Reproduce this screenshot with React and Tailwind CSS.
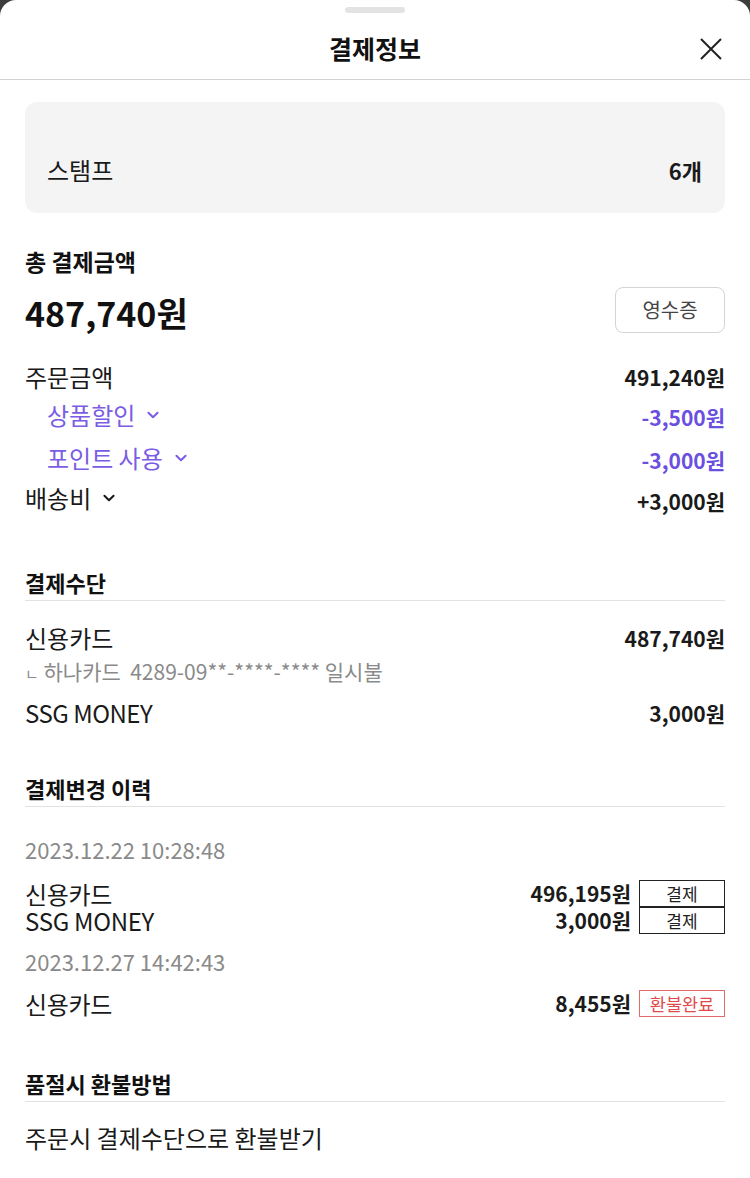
const FONT = { fontFamily: '"Noto Sans CJK KR", "Noto Sans", sans-serif' };

function Chevron({ className = "" }) {
  return (
    <svg viewBox="0 0 24 24" width="22" height="22" fill="none" stroke="currentColor" strokeWidth="2.2" strokeLinecap="round" strokeLinejoin="round" className={className}>
      <path d="m7 9.5 5 5 5-5" />
    </svg>
  );
}

function Row({ label, amount, className = "", amountClass = "", labelClass = "" }) {
  return (
    <div className={`flex h-[30px] items-center justify-between ${className}`}>
      <div className={`flex items-center text-[24px] leading-[30px] ${labelClass}`}>{label}</div>
      <div className={`text-[21px] leading-[30px] font-bold ${amountClass}`}>{amount}</div>
    </div>
  );
}

function SectionTitle({ children, className = "" }) {
  return (
    <div className={`border-b border-[#e2e2e2] pb-[4px] text-[22px] leading-[28px] font-bold text-[#111] ${className}`}>
      {children}
    </div>
  );
}

function HistoryRow({ label, amount, tag, refund, className = "" }) {
  return (
    <div className={`flex h-[27px] items-center justify-between ${className}`}>
      <span className="text-[24px] leading-[27px] tracking-[-0.3px]">{label}</span>
      <div className="flex items-center">
        <span className="mr-[8px] text-[21px] leading-[27px] font-bold">{amount}</span>
        <span
          className={`flex h-[27px] w-[86px] items-center justify-center leading-none ${
            refund
              ? "h-[26px] border border-[#e36a6a] text-[17.5px] text-[#e04a4a]"
              : "border-[1.5px] border-[#222] text-[17px] text-[#222]"
          }`}
        >
          {tag}
        </span>
      </div>
    </div>
  );
}

export default function App() {
  return (
    <div className="min-h-[1178px] bg-[#3d3d3d]" style={FONT}>
      <div className="min-h-[1178px] rounded-t-[16px] bg-white text-[#1a1a1a]">
        {/* header */}
        <div className="relative border-b border-[#d2d2d2] pt-[7px]">
          <div className="mx-auto h-[6px] w-[60px] rounded-full bg-[#e3e3e3]" />
          <div className="mt-[6px] flex h-[60px] items-center justify-center text-[25px] font-bold text-[#111]">
            결제정보
          </div>
          <button className="absolute right-[27px] top-[37px] text-[#222]">
            <svg viewBox="0 0 24 24" width="24" height="24" fill="none" stroke="currentColor" strokeWidth="2">
              <path d="M2 2 22 22M22 2 2 22" />
            </svg>
          </button>
        </div>

        <div className="px-[25px]">
          {/* stamp */}
          <div className="mt-[22px] flex h-[111px] items-center justify-between rounded-[12px] bg-[#f4f4f4] pl-[22px] pr-[23px] pt-[25px]">
            <span className="text-[24px]">스탬프</span>
            <span className="text-[22px] font-bold">6개</span>
          </div>

          {/* total */}
          <div className="mt-[34px] text-[23px] leading-[28px] font-bold text-[#111]">총 결제금액</div>
          <div className="mt-[12px] flex h-[46px] items-center justify-between">
            <span className="translate-y-[3px] text-[34px] leading-[40px] font-bold text-[#111]">487,740원</span>
            <button className="h-[46px] w-[110px] rounded-[8px] border-[1.5px] border-[#d4d4d4] text-[20px] text-[#444]">
              영수증
            </button>
          </div>

          <Row className="mt-[29px]" label="주문금액" amount="491,240원" />
          <Row
            className="mt-[8px]"
            labelClass="pl-[22px] text-[#7a5de3]"
            amountClass="translate-y-[2px] text-[#6a4fe0]"
            label={
              <>
                상품할인
                <Chevron className="ml-[7px]" />
              </>
            }
            amount="-3,500원"
          />
          <Row
            className="mt-[13px]"
            labelClass="pl-[22px] text-[#7a5de3]"
            amountClass="translate-y-[2px] text-[#6a4fe0]"
            label={
              <>
                포인트 사용
                <Chevron className="ml-[7px]" />
              </>
            }
            amount="-3,000원"
          />
          <Row
            className="mt-[10px]"
            amountClass="translate-y-[3px]"
            label={
              <>
                배송비
                <Chevron className="ml-[7px]" />
              </>
            }
            amount="+3,000원"
          />

          {/* payment method */}
          <SectionTitle className="mt-[55px]">결제수단</SectionTitle>
          <Row className="mt-[22px]" label="신용카드" amount="487,740원" />
          <div className="mt-[5px] text-[21px] leading-[26px] text-[#8a8a8a]">
            <span className="text-[15px]">ㄴ</span> 하나카드&nbsp;&nbsp;4289-09**-****-**** 일시불
          </div>
          <Row className="mt-[11px]" label="SSG MONEY" amount="3,000원" labelClass="tracking-[-0.5px]" />

          {/* history */}
          <SectionTitle className="mt-[46px]">결제변경 이력</SectionTitle>
          <div className="mt-[28px] text-[22px] leading-[28px] text-[#8a8a8a]">2023.12.22 10:28:48</div>
          <HistoryRow className="mt-[17px]" label="신용카드" amount="496,195원" tag="결제" />
          <HistoryRow label="SSG MONEY" amount="3,000원" tag="결제" />
          <div className="mt-[13px] text-[22px] leading-[28px] text-[#8a8a8a]">2023.12.27 14:42:43</div>
          <HistoryRow className="mt-[15px]" label="신용카드" amount="8,455원" tag="환불완료" refund />

          {/* refund method */}
          <SectionTitle className="mt-[52px]">품절시 환불방법</SectionTitle>
          <div className="mt-[21px] text-[24px] leading-[30px]">주문시 결제수단으로 환불받기</div>
        </div>
      </div>
    </div>
  );
}
